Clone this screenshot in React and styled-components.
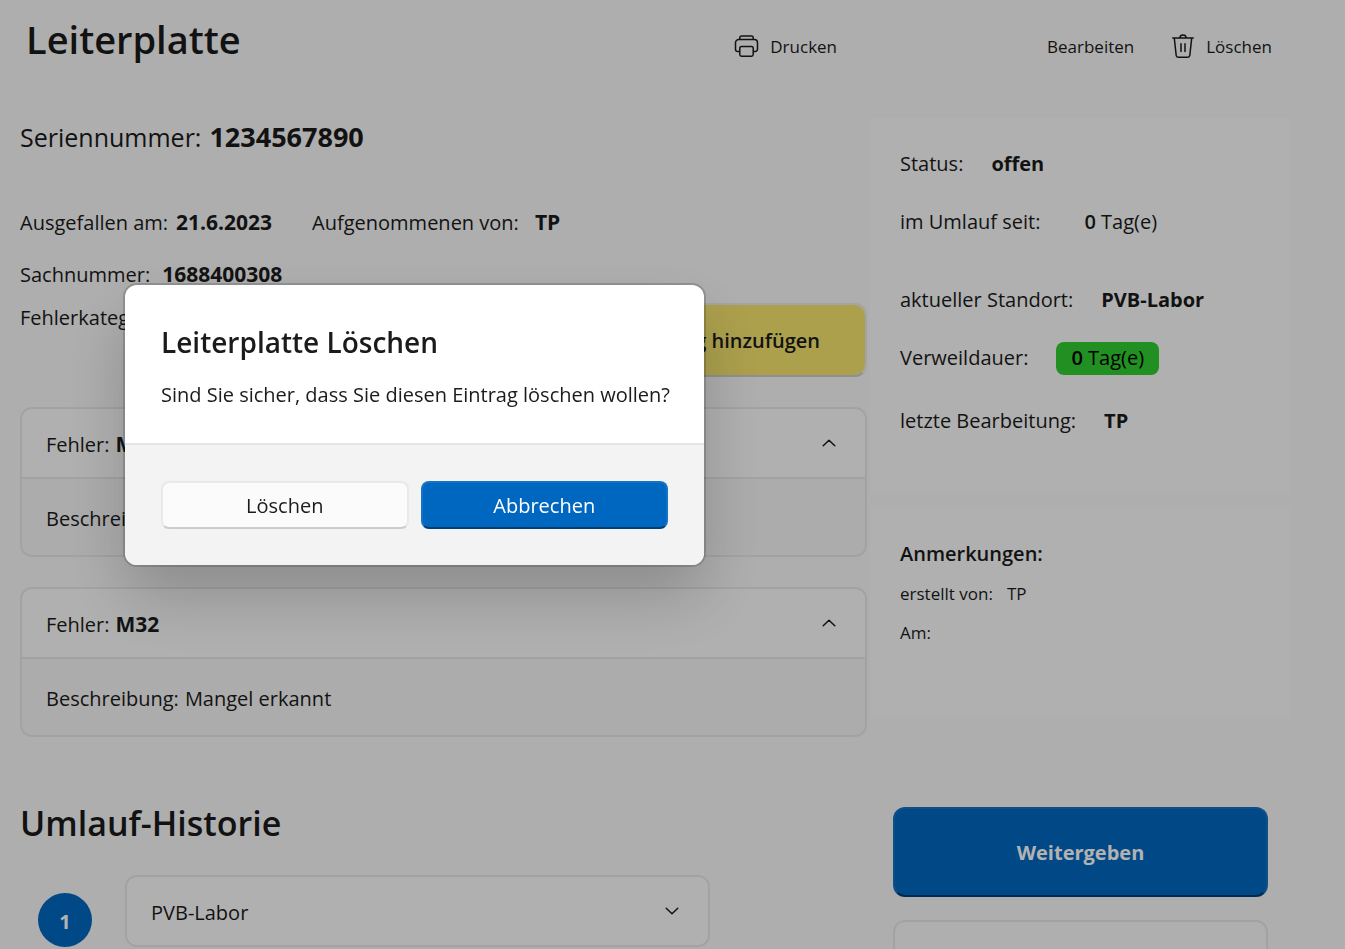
import React from 'react';
import styled, { createGlobalStyle, css } from 'styled-components';

const GlobalStyle = createGlobalStyle`
  *, *::before, *::after { box-sizing: border-box; }
  body {
    margin: 0;
    background: #f9f9f9;
    color: #1b1b1b;
    font-family: "Segoe UI", "Open Sans", "Noto Sans", sans-serif;
    font-size: 20px;
    line-height: 28px;
  }
  h1, h2, h3, p, dl, dd, dt { margin: 0; font: inherit; }
  button { font: inherit; color: inherit; cursor: pointer; }
`;

const Page = styled.div`
  height: 100vh;
  overflow: hidden;
  padding: 0 55px 0 20px;
`;

const Header = styled.header`
  display: flex;
  align-items: center;
  height: 94px;
  padding: 0 18px 0 6px;
`;

const Title = styled.h1`
  flex: 1;
  padding-bottom: 16px;
  font-size: 38px;
  font-weight: 600;
  line-height: 56px;
`;

const Toolbar = styled.div`
  display: flex;
  gap: 36px;
`;

const ToolButton = styled.button`
  display: flex;
  align-items: center;
  gap: 10px;
  padding: 0;
  border: 0;
  background: none;
  font-size: 17px;
  line-height: 24px;
  margin-right: ${(p) => (p.$spaced ? '174px' : '0')};
`;

const Columns = styled.div`
  display: grid;
  grid-template-columns: minmax(0, 1fr) 420px;
  gap: 3px;
  align-items: start;
  padding-top: 24px;
`;

const Main = styled.main`
  display: flex;
  flex-direction: column;
  padding-top: 1px;
`;

const Strong = styled.strong`
  font-weight: 700;
`;

const Value = styled(Strong)`
  font-size: 21px;
  line-height: 24px;
`;

const Serial = styled.p`
  display: flex;
  align-items: baseline;
  gap: 8px;
  font-size: 25px;
  line-height: 36px;
  margin-bottom: 54px;
  ${Strong} { font-size: 27px; line-height: 32px; }
`;

const Facts = styled.dl`
  display: flex;
  gap: 40px;
  margin-bottom: 24px;
`;

const Fact = styled.div`
  display: flex;
  align-items: baseline;
  gap: ${(p) => p.$gap || 16}px;
`;

const CategoryRow = styled.div`
  display: flex;
  justify-content: space-between;
  align-items: flex-start;
  margin: -10px 0 30px;
`;

const CategoryLabel = styled.span`
  padding-top: 1px;
`;

const AddButton = styled.button`
  height: 74px;
  padding: 1px 45px 0;
  border: 2px solid #ebebeb;
  border-bottom-color: #cfcfcf;
  border-radius: 12px;
  background: #f6e56f;
  background-clip: padding-box;
  font-weight: 600;
`;

const Card = styled.section`
  border: 2px solid #e9e9e9;
  border-radius: 12px;
  background: #f7f7f7;
  overflow: hidden;
  margin-bottom: 30px;
`;

const CardHeader = styled.button`
  display: flex;
  align-items: center;
  gap: 6px;
  width: 100%;
  height: 68px;
  padding: 0 29px 0 24px;
  border: 0;
  background: #fdfdfd;
  text-align: left;
  svg { margin-left: auto; }
`;

const CardLabel = styled.span`
  display: flex;
  align-items: baseline;
  gap: 6px;
  padding-top: 3px;
`;

const CardBody = styled.div`
  display: flex;
  align-items: center;
  height: 78px;
  padding: 0 24px;
  border-top: 2px solid #e9e9e9;
`;

const SectionTitle = styled.h2`
  margin: 32px 0 28px;
  font-size: 34px;
  font-weight: 600;
  line-height: 48px;
`;

const HistoryRow = styled.div`
  display: grid;
  grid-template-columns: 54px 585px;
  column-gap: 33px;
  padding-left: 18px;
`;

const Step = styled.span`
  width: 54px;
  height: 54px;
  margin-top: 18px;
  padding-top: 2px;
  border-radius: 50%;
  background: #0067c0;
  color: #fff;
  font-weight: 700;
  line-height: 54px;
  text-align: center;
`;

const Aside = styled.aside`
  display: flex;
  flex-direction: column;
  gap: 15px;
`;

const Panel = styled.section`
  padding: 32px 30px 0;
  background: #fdfdfd;
  height: ${(p) => p.$height}px;
`;

const StatusRow = styled.div`
  display: flex;
  gap: ${(p) => p.$gap || 28}px;
  margin-bottom: ${(p) => p.$after || 30}px;
`;

const Badge = styled.span`
  margin: -2px 0;
  padding: 2px 15px 3px;
  border-radius: 8px;
  background: limegreen;
  color: #000;
`;

const Semi = styled.span`
  font-weight: 600;
`;

const NoteTitle = styled.h3`
  font-weight: 600;
  margin-bottom: 14px;
`;

const NoteRow = styled.p`
  display: flex;
  gap: 14px;
  margin-bottom: 15px;
  font-size: 17px;
  line-height: 24px;
`;

const Actions = styled.div`
  display: flex;
  flex-direction: column;
  gap: 23px;
  padding: 75px 22px 0 23px;
`;

const accent = css`
  border-color: #1473c5 #1473c5 #003e73;
  background: #0067c0;
  color: #fff;
`;

const neutral = css`
  border-color: #e9e9e9 #e9e9e9 #cccccc;
  background: #fbfbfb;
`;

const BigButton = styled.button`
  height: 90px;
  padding-top: 3px;
  border: 2px solid;
  border-radius: 12px;
  font-weight: 700;
  ${(p) => (p.$accent ? accent : neutral)}
`;

const Overlay = styled.div`
  position: fixed;
  inset: 0;
  padding: 285px 0 0 125px;
  background: rgba(0, 0, 0, 0.3);
`;

const Dialog = styled.div`
  width: 579px;
  border-radius: 12px;
  background: #fff;
  overflow: hidden;
  box-shadow: 0 0 0 2px rgba(0, 0, 0, 0.16), 0 32px 64px rgba(0, 0, 0, 0.2);
`;

const DialogText = styled.div`
  padding: 37px 24px 34px 36px;
`;

const DialogTitle = styled.h2`
  margin-bottom: 19px;
  font-size: 28px;
  font-weight: 600;
  line-height: 40px;
`;

const DialogActions = styled.div`
  display: grid;
  grid-template-columns: 1fr 1fr;
  gap: 12px;
  padding: 36px;
  border-top: 2px solid #e5e5e5;
  background: #f3f3f3;
`;

const DialogButton = styled.button`
  height: 48px;
  padding-top: 3px;
  border: 2px solid;
  border-radius: 8px;
  ${(p) => (p.$accent ? accent : neutral)}
`;

const Chevron = ({ up }) => (
  <svg width="14" height="8" viewBox="0 0 14 8" fill="none" stroke="currentColor" strokeWidth="1.5" strokeLinecap="round" strokeLinejoin="round" aria-hidden="true">
    <path d={up ? 'M1.2 6.8 7 1.2l5.8 5.6' : 'M1.2 1.2 7 6.8l5.8-5.6'} />
  </svg>
);

const PrinterIcon = () => (
  <svg width="26" height="26" viewBox="0 0 26 26" fill="none" stroke="currentColor" strokeWidth="1.5" aria-hidden="true">
    <path d="M5.8 5.5V3.8A1.7 1.7 0 0 1 7.500 2.1h10A1.7 1.7 0 0 1 19.2 3.8V5.5" />
    <path d="M6 17.5H3.8A2.3 2.3 0 0 1 1.5 15.2V8.8A3.2 3.2 0 0 1 4.7 5.6H20.3A3.2 3.2 0 0 1 23.5 8.8V15.2A2.3 2.3 0 0 1 21.2 17.5H19" />
    <rect x="5.8" y="12.4" width="13.4" height="9.8" rx="1.7" />
  </svg>
);

const TrashIcon = () => (
  <svg width="26" height="26" viewBox="0 0 26 26" fill="none" stroke="currentColor" strokeWidth="1.5" strokeLinecap="round" aria-hidden="true">
    <path d="M2.8 4H23.2M10 3.8a3 2.7 0 0 1 6 0M4.3 4.2 6.2 21.5A2 2 0 0 0 8.2 23.3H17.8A2 2 0 0 0 19.8 21.5L21.7 4.2M11 9.8V17.5M15 9.8V17.5" />
  </svg>
);

export default function App() {
  return (
    <>
      <GlobalStyle />
      <Page>
        <Header>
          <Title>Leiterplatte</Title>
          <Toolbar>
            <ToolButton type="button" $spaced><PrinterIcon />Drucken</ToolButton>
            <ToolButton type="button">Bearbeiten</ToolButton>
            <ToolButton type="button"><TrashIcon />Löschen</ToolButton>
          </Toolbar>
        </Header>
        <Columns>
          <Main>
            <Serial>Seriennummer: <Strong>1234567890</Strong></Serial>
            <Facts>
              <Fact $gap={8}><dt>Ausgefallen am:</dt><dd><Value>21.6.2023</Value></dd></Fact>
              <Fact><dt>Aufgenommenen von:</dt><dd><Value>TP</Value></dd></Fact>
            </Facts>
            <Facts>
              <Fact $gap={12}><dt>Sachnummer:</dt><dd><Value>1688400308</Value></dd></Fact>
            </Facts>
            <CategoryRow>
              <CategoryLabel>Fehlerkategorie:</CategoryLabel>
              <AddButton type="button">Eintrag hinzufügen</AddButton>
            </CategoryRow>
            <Card>
              <CardHeader type="button" aria-expanded="true">
                <CardLabel>Fehler: <Value>M31</Value></CardLabel><Chevron up />
              </CardHeader>
              <CardBody><CardLabel>Beschreibung:</CardLabel></CardBody>
            </Card>
            <Card>
              <CardHeader type="button" aria-expanded="true">
                <CardLabel>Fehler: <Value>M32</Value></CardLabel><Chevron up />
              </CardHeader>
              <CardBody><CardLabel>Beschreibung: <span>Mangel erkannt</span></CardLabel></CardBody>
            </Card>
            <SectionTitle>Umlauf-Historie</SectionTitle>
            <HistoryRow>
              <Step>1</Step>
              <Card>
                <CardHeader type="button" aria-expanded="false">
                  <CardLabel>PVB-Labor</CardLabel><Chevron />
                </CardHeader>
              </Card>
            </HistoryRow>
          </Main>
          <Aside>
            <Panel $height={375}>
              <StatusRow><span>Status:</span><Strong>offen</Strong></StatusRow>
              <StatusRow $gap={44} $after={50}><span>im Umlauf seit:</span><span><Semi>0</Semi> Tag(e)</span></StatusRow>
              <StatusRow><span>aktueller Standort:</span><Strong>PVB-Labor</Strong></StatusRow>
              <StatusRow $after={34}><span>Verweildauer:</span><Badge><Semi>0</Semi> Tag(e)</Badge></StatusRow>
              <StatusRow><span>letzte Bearbeitung:</span><Strong>TP</Strong></StatusRow>
            </Panel>
            <Panel $height={209}>
              <NoteTitle>Anmerkungen:</NoteTitle>
              <NoteRow><span>erstellt von:</span><span>TP</span></NoteRow>
              <NoteRow>Am:</NoteRow>
            </Panel>
            <Actions>
              <BigButton type="button" $accent>Weitergeben</BigButton>
              <BigButton type="button" />
            </Actions>
          </Aside>
        </Columns>
      </Page>
      <Overlay>
        <Dialog role="dialog" aria-modal="true" aria-labelledby="dialog-title">
          <DialogText>
            <DialogTitle id="dialog-title">Leiterplatte Löschen</DialogTitle>
            <p>Sind Sie sicher, dass Sie diesen Eintrag löschen wollen?</p>
          </DialogText>
          <DialogActions>
            <DialogButton type="button">Löschen</DialogButton>
            <DialogButton type="button" $accent>Abbrechen</DialogButton>
          </DialogActions>
        </Dialog>
      </Overlay>
    </>
  );
}
